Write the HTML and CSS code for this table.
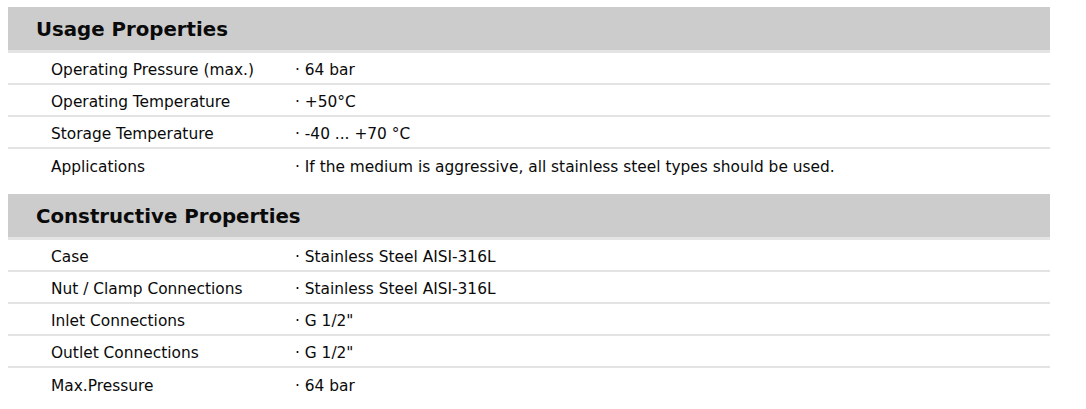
FILE: index.html
```html
<!DOCTYPE html>
<html>
<head>
<meta charset="utf-8">
<link rel="stylesheet" href="styles.css">
</head>
<body>
<div class="page">
  <section class="group">
    <h2 class="group-title">Usage Properties</h2>
    <div class="row"><div class="label">Operating Pressure (max.)</div><div class="value">· 64 bar</div></div>
    <div class="row"><div class="label">Operating Temperature</div><div class="value">· +50°C</div></div>
    <div class="row"><div class="label">Storage Temperature</div><div class="value">· -40 ... +70 °C</div></div>
    <div class="row last"><div class="label">Applications</div><div class="value">· If the medium is aggressive, all stainless steel types should be used.</div></div>
  </section>
  <section class="group">
    <h2 class="group-title">Constructive Properties</h2>
    <div class="row"><div class="label">Case</div><div class="value">· Stainless Steel AISI-316L</div></div>
    <div class="row"><div class="label">Nut / Clamp Connections</div><div class="value">· Stainless Steel AISI-316L</div></div>
    <div class="row"><div class="label">Inlet Connections</div><div class="value">· G 1/2"</div></div>
    <div class="row"><div class="label">Outlet Connections</div><div class="value">· G 1/2"</div></div>
    <div class="row last"><div class="label">Max.Pressure</div><div class="value">· 64 bar</div></div>
  </section>
</div>
</body>
</html>
```

FILE: styles.css
```css
html, body {
  margin: 0;
  padding: 0;
  background: #fff;
}
body {
  font-family: "DejaVu Sans", sans-serif;
  color: #0a0a0a;
}
.page {
  width: 1042px;
  padding: 7px 0 0 8px;
  display: flex;
  flex-direction: column;
  gap: 13px;
}
.group {
  display: flex;
  flex-direction: column;
}
.group-title {
  margin: 0;
  height: 41px;
  padding-top: 2px;
  box-sizing: content-box;
  background: #cccccc;
  border-bottom: 3px solid #e4e4e4;
  display: flex;
  align-items: center;
  padding-left: 28px;
  font-size: 19.75px;
  font-weight: bold;
  color: #0a0a0a;
}
.row {
  display: grid;
  grid-template-columns: 244px 1fr;
  height: 27px;
  padding-top: 3px;
  align-items: center;
  border-bottom: 2px solid #e3e3e3;
  padding-left: 43px;
  font-size: 15.4px;
}
.row.last {
  border-bottom: none;
  height: 29px;
}
```
